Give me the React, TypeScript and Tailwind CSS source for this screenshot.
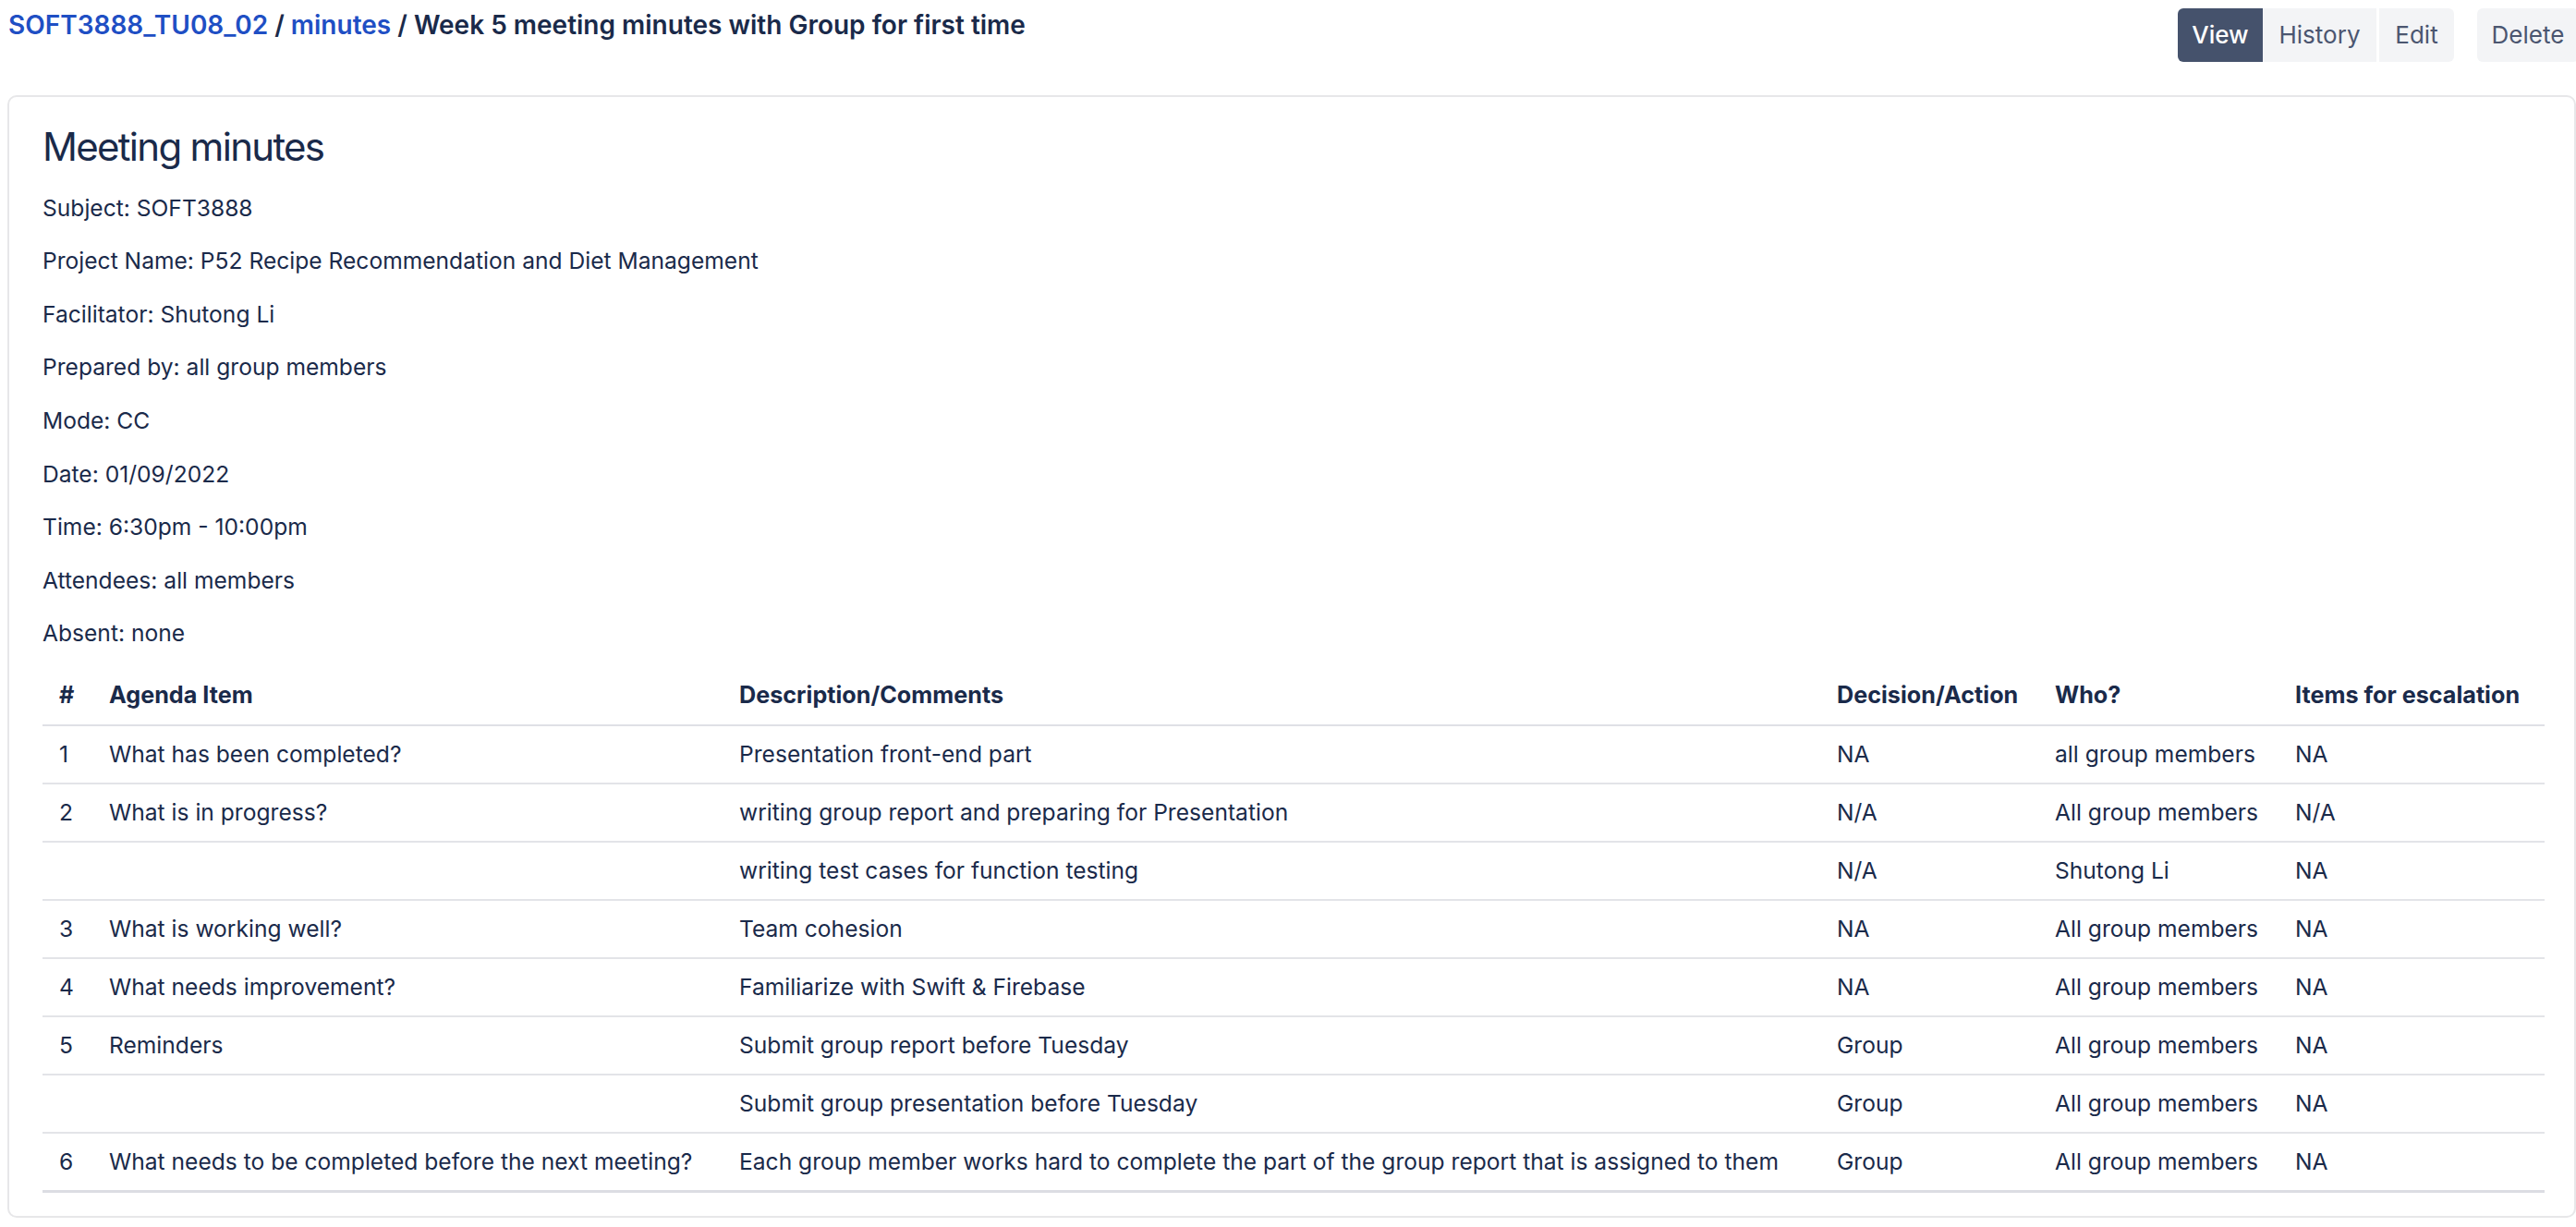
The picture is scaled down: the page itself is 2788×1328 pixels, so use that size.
import React from "react";

const info = [
  "Subject: SOFT3888",
  "Project Name: P52 Recipe Recommendation and Diet Management",
  "Facilitator: Shutong Li",
  "Prepared by: all group members",
  "Mode: CC",
  "Date: 01/09/2022",
  "Time: 6:30pm - 10:00pm",
  "Attendees: all members",
  "Absent: none",
];

const rows: string[][] = [
  ["1", "What has been completed?", "Presentation front-end part", "NA", "all group members", "NA"],
  ["2", "What is in progress?", "writing group report and preparing for Presentation", "N/A", "All group members", "N/A"],
  ["", "", "writing test cases for function testing", "N/A", "Shutong Li", "NA"],
  ["3", "What is working well?", "Team cohesion", "NA", "All group members", "NA"],
  ["4", "What needs improvement?", "Familiarize with Swift & Firebase", "NA", "All group members", "NA"],
  ["5", "Reminders", "Submit group report before Tuesday", "Group", "All group members", "NA"],
  ["", "", "Submit group presentation before Tuesday", "Group", "All group members", "NA"],
  ["6", "What needs to be completed before the next meeting?", "Each group member works hard to complete the part of the group report that is assigned to them", "Group", "All group members", "NA"],
];

const headers = ["#", "Agenda Item", "Description/Comments", "Decision/Action", "Who?", "Items for escalation"];

export default function App() {
  return (
    <div
      className="w-[2788px] h-[1328px] overflow-hidden bg-white text-[#1a2a4a]"
      style={{ fontFamily: "Inter, 'Noto Sans', sans-serif" }}
    >
      <div className="flex w-[2791px] items-start pt-[9px]">
        <div className="flex-1 pl-[9px] pt-[1px] text-[28px] font-semibold leading-[34px]">
          <span className="text-[#1f4fc4]">SOFT3888_TU08_02</span>
          <span> / </span>
          <span className="text-[#1f4fc4]">minutes</span>
          <span> / Week 5 meeting minutes with Group for first time</span>
        </div>
        <div className="flex items-center text-[26px] leading-[58px]">
          <div className="h-[58px] w-[92px] rounded-l-[6px] bg-[#45526c] text-center font-medium text-white">View</div>
          <div className="h-[58px] w-[123px] bg-[#f3f4f6] text-center text-[#4b5670]">History</div>
          <div className="ml-[3px] h-[58px] w-[81px] rounded-r-[6px] bg-[#f3f4f6] text-center text-[#4b5670]">Edit</div>
          <div className="ml-[25px] h-[58px] w-[110px] rounded-[6px] bg-[#f3f4f6] text-center text-[#4b5670]">Delete</div>
        </div>
      </div>

      <div className="ml-[8px] mt-[36px] w-[2780px] rounded-[10px] border-2 border-[#e7e7e9] pb-[25px] pl-[36px] pr-[32px] pt-[27px]">
        <div className="flex flex-col gap-[21.6px]">
          <h1 className="text-[42px] font-normal leading-[53px] tracking-[-1.7px]">Meeting minutes</h1>
          {info.map((t) => (
            <p key={t} className="text-[24.6px] leading-[36px]">
              {t}
            </p>
          ))}
        </div>

        <table className="mt-[19px] w-[2708px] table-fixed border-collapse text-[24.6px]">
          <colgroup>
            <col className="w-[54px]" />
            <col className="w-[682px]" />
            <col className="w-[1188px]" />
            <col className="w-[236px]" />
            <col className="w-[260px]" />
            <col className="w-[288px]" />
          </colgroup>
          <thead>
            <tr className="h-[63px] border-b-2 border-[#dfe0e6]">
              {headers.map((h) => (
                <th key={h} className="pl-[18px] text-left text-[25.2px] font-bold whitespace-nowrap">
                  {h}
                </th>
              ))}
            </tr>
          </thead>
          <tbody>
            {rows.map((r, i) => (
              <tr
                key={i}
                className={
                  i === rows.length - 1
                    ? "h-[63px] border-b-[3px] border-[#dcdde3]"
                    : "h-[63px] border-b-2 border-[#e3e4e8]"
                }
              >
                {r.map((c, j) => (
                  <td key={j} className="pl-[18px] whitespace-nowrap">
                    {c}
                  </td>
                ))}
              </tr>
            ))}
          </tbody>
        </table>
      </div>
    </div>
  );
}
